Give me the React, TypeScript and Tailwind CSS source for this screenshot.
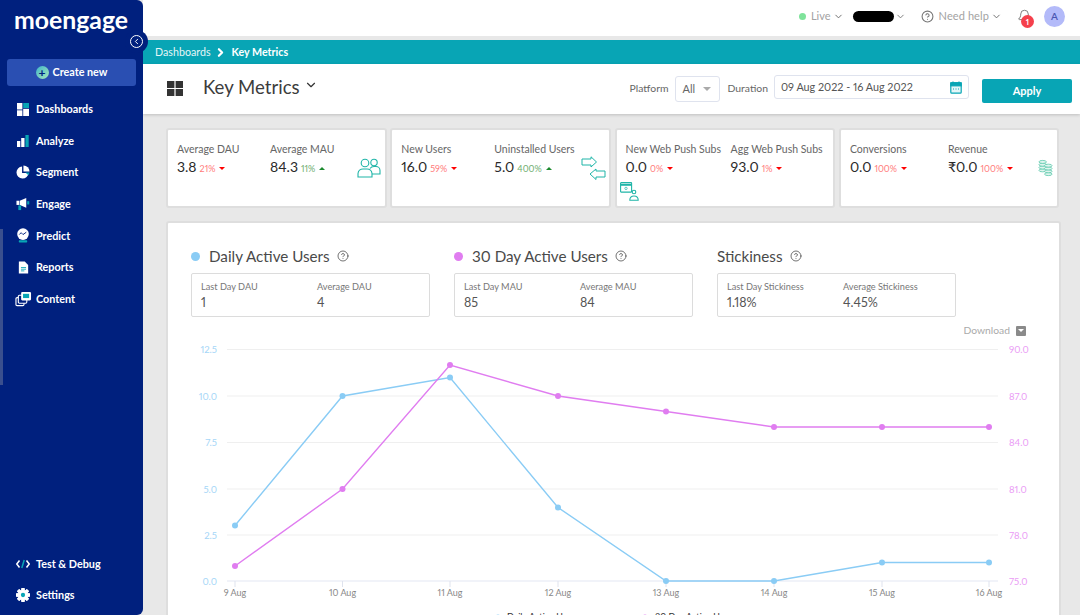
import { ReactNode } from "react";
import { Bell, ChevronDown, ChevronRight, CircleHelp, ChevronLeft } from "lucide-react";

const TEAL = "#08a5b5";
const BLUE = "#8accf5";
const PINK = "#e07df0";

function DashIcon() {
  return (
    <svg width="12" height="13" viewBox="0 0 12 13">
      <rect x="0" y="0" width="5.4" height="6.5" fill="#fff" />
      <rect x="6.2" y="0" width="5.8" height="5" fill={TEAL} />
      <rect x="0" y="7.3" width="5.4" height="5.7" fill="#fff" />
      <rect x="6.2" y="5.8" width="5.8" height="7.2" fill="#fff" />
    </svg>
  );
}

function AnalyzeIcon() {
  return (
    <svg width="12" height="12" viewBox="0 0 12 12">
      <rect x="0" y="6" width="3.3" height="6" fill="#fff" />
      <rect x="4.2" y="3" width="3.3" height="9" fill="#fff" />
      <rect x="8.4" y="0" width="3.3" height="12" fill={TEAL} />
    </svg>
  );
}

function SegmentIcon() {
  return (
    <svg width="14" height="14" viewBox="0 0 15 15">
      <path d="M6.5 1.5a6.5 6.5 0 1 0 7 7h-7z" fill="#fff" />
      <path d="M8 0.5a6.5 6.5 0 0 1 6.5 6.5H8z" fill="#fff" />
      <path d="M10 8h4.5l-1.2 3z" fill={TEAL} />
    </svg>
  );
}

function EngageIcon() {
  return (
    <svg width="14" height="14" viewBox="0 0 15 15">
      <path d="M0.5 4h3v4.5h-3z" fill="#fff" />
      <path d="M4 4l7-3v10.5l-7-3z" fill="#fff" />
      <rect x="12" y="4.5" width="2.2" height="3.5" fill={TEAL} />
      <rect x="2.5" y="9" width="3" height="5" fill={TEAL} />
    </svg>
  );
}

function PredictIcon() {
  return (
    <svg width="14" height="15" viewBox="0 0 15 16">
      <circle cx="7.5" cy="6.5" r="6.2" fill="#fff" />
      <path d="M3.5 7l2-2 2 2 3.5-2.5" fill="none" stroke="#00207e" strokeWidth="1" />
      <rect x="3" y="13" width="9" height="2.6" rx="0.8" fill={TEAL} />
    </svg>
  );
}

function ReportsIcon() {
  return (
    <svg width="11" height="13" viewBox="0 0 13 15">
      <path d="M1 0.5h7l4 4v10H1z" fill="#fff" />
      <path d="M3.5 7.5h6M3.5 9.5h6M3.5 11.5h4" stroke={TEAL} strokeWidth="1" />
    </svg>
  );
}

function ContentIcon() {
  return (
    <svg width="17" height="16" viewBox="0 0 18 17">
      <rect x="1" y="7" width="8.5" height="8.5" rx="1.2" fill="none" stroke="#fff" strokeWidth="1.2" />
      <rect x="3.5" y="4.5" width="9" height="8.5" rx="1.2" fill="#00207e" stroke="#fff" strokeWidth="1.2" />
      <rect x="6.5" y="1" width="10.5" height="9" rx="1.2" fill="#fff" />
      <rect x="8.5" y="3" width="6.5" height="4.5" fill={TEAL} />
    </svg>
  );
}

function DebugIcon() {
  return (
    <svg width="14" height="10" viewBox="0 0 14 10" fill="none" strokeWidth="1.5">
      <path d="M3.5 1.5L0.8 5l2.7 3.5" stroke="#fff" />
      <path d="M10.5 1.5L13.2 5l-2.7 3.5" stroke="#fff" />
      <path d="M8.2 1L5.8 9" stroke={TEAL} />
    </svg>
  );
}

function GearIcon() {
  const teeth = [0, 45, 90, 135, 180, 225, 270, 315];
  return (
    <svg width="14" height="14" viewBox="0 0 15 15">
      {teeth.map((deg) => (
        <rect key={deg} x="5.7" y="0" width="3.6" height="15" rx="0.8" fill="#fff" transform={`rotate(${deg} 7.5 7.5)`} />
      ))}
      <circle cx="7.5" cy="7.5" r="5.2" fill="#fff" />
      <circle cx="7.5" cy="7.5" r="2.3" fill={TEAL} />
    </svg>
  );
}

function NavItem({ icon, label, className }: { icon: ReactNode; label: string; className?: string }) {
  return (
    <div className={`flex h-[31.6px] items-center text-[10.8px] font-bold text-white ${className ?? ""}`}>
      <span className="flex w-[36px] justify-center pl-[10px]">{icon}</span>
      {label}
    </div>
  );
}

function Sidebar() {
  return (
    <aside className="relative z-10 flex h-[615px] w-[143px] shrink-0 flex-col rounded-r-[6px] bg-[#00207e]">
      <div className="relative h-[36px] pl-[14px] pt-[4px] text-[24.8px] font-bold leading-[32px] text-white">
        moengage
        <span className="absolute left-[39px] top-[24px] h-[3px] w-[5px] rounded-full bg-[#00207e]" />
      </div>
      <button className="mx-[7px] mt-[23px] flex h-[27px] items-center justify-center gap-[4px] rounded-[3px] bg-[#2a4fb2] text-[10.8px] font-bold text-white">
        <span className="flex h-[13px] w-[13px] items-center justify-center rounded-full bg-gradient-to-br from-[#38b6c8] to-[#a5e8b8] text-[12px] leading-none text-[#00207e]">+</span>
        Create new
      </button>
      <nav className="mt-[7.5px] flex flex-col">
        <NavItem icon={<DashIcon />} label="Dashboards" />
        <NavItem icon={<AnalyzeIcon />} label="Analyze" />
        <NavItem icon={<SegmentIcon />} label="Segment" />
        <NavItem icon={<EngageIcon />} label="Engage" />
        <NavItem icon={<PredictIcon />} label="Predict" />
        <NavItem icon={<ReportsIcon />} label="Reports" />
        <NavItem icon={<ContentIcon />} label="Content" />
      </nav>
      <div className="mt-auto pb-[4px]">
        <NavItem icon={<DebugIcon />} label="Test & Debug" />
        <NavItem icon={<GearIcon />} label="Settings" />
      </div>
      <div className="absolute left-0 top-[229px] h-[156px] w-[3px] bg-[#3a4f8e]" />
      <div className="absolute left-[125px] top-[30px] flex h-[23px] w-[23px] items-center justify-center rounded-full bg-[#00207e]">
        <span className="flex h-[13px] w-[13px] items-center justify-center rounded-full border border-white text-white">
          <ChevronLeft size={9} strokeWidth={2.5} />
        </span>
      </div>
    </aside>
  );
}

function TopBar() {
  return (
    <div className="flex h-[36px] shrink-0 items-center justify-end bg-white pb-[4px] text-[11px] text-[#a3a3a3]">
      <span className="h-[7px] w-[7px] rounded-full bg-[#7fe39b]" />
      <span className="ml-[5px]">Live</span>
      <ChevronDown size={11} className="ml-[2px] text-[#666]" />
      <span className="ml-[9px] h-[11px] w-[41px] rounded-full bg-black" />
      <ChevronDown size={11} className="ml-[1px] text-[#777]" />
      <CircleHelp size={13} className="ml-[15px] text-[#777]" />
      <span className="ml-[5px] tracking-[0.1px]">Need help</span>
      <ChevronDown size={11} className="ml-[2px] text-[#666]" />
      <span className="relative ml-[14px] flex h-[20px] w-[16px] items-center justify-center">
        <Bell size={15} strokeWidth={1.5} className="text-[#777]" />
        <span className="absolute left-[5px] top-[9px] flex h-[13px] w-[13px] items-center justify-center rounded-full bg-[#f5404c] text-[8px] font-bold text-white">1</span>
      </span>
      <span className="ml-[12px] mr-[15px] flex h-[21px] w-[21px] items-center justify-center rounded-full bg-[#b3baf9] text-[10px] font-semibold text-[#4a55b0]">A</span>
    </div>
  );
}

function PageHeader() {
  return (
    <div className="relative flex h-[50px] shrink-0 items-center bg-white pl-[24px] pr-[8px] shadow-[0_1px_3px_rgba(0,0,0,0.18)]">
      <svg className="mt-[-2px]" width="16" height="15" viewBox="0 0 16 15" fill="#333">
        <rect x="0" y="0" width="7.4" height="7" />
        <rect x="8.6" y="0" width="7.4" height="7" />
        <rect x="0" y="8" width="7.4" height="7" />
        <rect x="8.6" y="8" width="7.4" height="7" />
      </svg>
      <span className="ml-[20px] mt-[-2px] text-[18.6px] text-[#3c3c3c]">Key Metrics</span>
      <ChevronDown size={14} strokeWidth={2} className="ml-[4px] mt-[-8px] text-[#333]" />
      <span className="ml-auto text-[10.4px] text-[#666]">Platform</span>
      <span className="ml-[6px] flex h-[26px] w-[45px] items-center justify-between rounded-[3px] border border-[#dfe3ee] pl-[7px] pr-[8px] text-[11px] text-[#666]">
        All
        <span className="h-0 w-0 border-x-[4px] border-t-[4px] border-x-transparent border-t-[#aaa]" />
      </span>
      <span className="ml-[8px] text-[10.4px] text-[#666]">Duration</span>
      <span className="ml-[6px] mt-[-4px] flex h-[24px] w-[195px] items-center justify-between rounded-[3px] border border-[#dfe3ee] pl-[6px] pr-[6px] text-[10.8px] text-[#555]">
        09 Aug 2022 - 16 Aug 2022
        <svg width="12" height="13" viewBox="0 0 12 13" fill="none" stroke={TEAL} strokeWidth="1.2">
          <rect x="0.8" y="1.8" width="10.4" height="10.4" rx="1" fill="#e4f6f8" />
          <rect x="0.8" y="1.8" width="10.4" height="3" fill={TEAL} />
          <path d="M3 0.5v2M9 0.5v2M3 8h1M5.5 8h1M8 8h1" />
        </svg>
      </span>
      <button className="ml-[13px] mt-[4px] h-[24px] w-[90px] rounded-[2px] bg-[#08a5b5] text-[11px] font-bold text-white">Apply</button>
    </div>
  );
}

function Delta({ pct, up }: { pct: string; up?: boolean }) {
  return (
    <span className={`ml-[3px] inline-flex items-center gap-[4px] text-[9px] ${up ? "text-[#6fae6f]" : "text-[#ff7b7b]"}`}>
      {pct}
      <span
        className={
          up
            ? "h-0 w-0 border-x-[3px] border-b-[3px] border-x-transparent border-b-[#1c8a2e]"
            : "h-0 w-0 border-x-[3px] border-t-[3px] border-x-transparent border-t-[#f00]"
        }
      />
    </span>
  );
}

type MetricProps = { label: string; value: string; pct: string; up?: boolean; width: string };

function Metric({ label, value, pct, up, width }: MetricProps) {
  return (
    <div className={`flex shrink-0 flex-col ${width}`}>
      <span className="whitespace-nowrap text-[10.5px] leading-[14px] text-[#666]">{label}</span>
      <span className="mt-[1px] flex items-baseline whitespace-nowrap text-[14px] leading-[19px] text-[#2a2a2a]">
        {value}
        <Delta pct={pct} up={up} />
      </span>
    </div>
  );
}

function MetricCard({ children }: { children: ReactNode }) {
  return (
    <div className="relative flex h-[80px] w-[220.5px] shrink-0 rounded-[3px] border-2 border-[#dedede] bg-white pl-[9px] pt-[12px]">
      {children}
    </div>
  );
}

function UsersIcon() {
  return (
    <svg className="absolute left-[189px] top-[28px]" width="24" height="20" viewBox="0 0 24 20" fill="none" stroke="#1fb5a8" strokeWidth="1.1">
      <circle cx="8" cy="5" r="3.8" />
      <circle cx="17" cy="4.5" r="3.2" />
      <path d="M1 19v-3.5a5 5 0 0 1 5-4.5h4a5 5 0 0 1 5 4.5V19z" />
      <path d="M13 10.5c1-1.5 2-2 4-2h2a4 4 0 0 1 4 4V16h-8" />
    </svg>
  );
}

function ArrowsIcon() {
  return (
    <svg className="absolute left-[189px] top-[26px]" width="25" height="24" viewBox="0 0 25 24" fill="none" stroke="#1fb5a8" strokeWidth="1">
      <path d="M1 3h9V0.8L15.5 6 10 11V9H1z" />
      <path d="M24 15h-9v-2L9 18l6 5.5V21h9z" />
    </svg>
  );
}

function WebPushIcon() {
  return (
    <svg className="absolute left-[3px] top-[52px]" width="20" height="19" viewBox="0 0 20 19" fill="none" stroke="#1fb5a8" strokeWidth="1.1">
      <rect x="0.6" y="0.6" width="11" height="9.5" rx="0.6" />
      <path d="M0.6 2.8h11" strokeWidth="2" />
      <circle cx="6" cy="6.4" r="1.2" strokeWidth="0.7" />
      <circle cx="14" cy="10" r="1.8" />
      <path d="M9.8 18.2c0-3 1.5-4.2 4.2-4.2s4.2 1.2 4.2 4.2z" />
    </svg>
  );
}

function CoinsIcon() {
  return (
    <svg className="absolute left-[197px] top-[29px]" width="15" height="18" viewBox="0 0 16 18" fill="#dff5ee" stroke="#54c5a8" strokeWidth="0.8">
      <ellipse cx="5" cy="11.5" rx="4" ry="1.6" />
      <ellipse cx="5" cy="8.5" rx="4" ry="1.6" />
      <ellipse cx="5" cy="5.5" rx="4" ry="1.6" />
      <ellipse cx="5" cy="2.5" rx="4" ry="1.6" />
      <ellipse cx="11" cy="15.5" rx="4" ry="1.6" />
      <ellipse cx="11" cy="12.5" rx="4" ry="1.6" />
      <ellipse cx="11" cy="9.5" rx="4" ry="1.6" />
      <ellipse cx="11" cy="6.5" rx="4" ry="1.6" />
    </svg>
  );
}

function CardsRow() {
  return (
    <div className="flex shrink-0 gap-[3.8px] pl-[23px] pt-[14px]">
      <MetricCard>
        <Metric label="Average DAU" value="3.8" pct="21%" width="w-[93px]" />
        <Metric label="Average MAU" value="84.3" pct="11%" up width="w-[90px]" />
        <UsersIcon />
      </MetricCard>
      <MetricCard>
        <Metric label="New Users" value="16.0" pct="59%" width="w-[93px]" />
        <Metric label="Uninstalled Users" value="5.0" pct="400%" up width="w-[90px]" />
        <ArrowsIcon />
      </MetricCard>
      <MetricCard>
        <Metric label="New Web Push Subs" value="0.0" pct="0%" width="w-[105px]" />
        <Metric label="Agg Web Push Subs" value="93.0" pct="1%" width="w-[100px]" />
        <WebPushIcon />
      </MetricCard>
      <MetricCard>
        <Metric label="Conversions" value="0.0" pct="100%" width="w-[98px]" />
        <Metric label="Revenue" value="₹0.0" pct="100%" width="w-[90px]" />
        <CoinsIcon />
      </MetricCard>
    </div>
  );
}

type StatProps = { dot?: string; title: string; labelA: string; valueA: string; labelB: string; valueB: string };

function StatBlock({ dot, title, labelA, valueA, labelB, valueB }: StatProps) {
  return (
    <div className="flex w-[239px] flex-col">
      <div className="flex h-[24px] items-center text-[15.2px] text-[#4a4a4a]">
        {dot && <span className={`mr-[9px] h-[9px] w-[9px] rounded-full ${dot}`} />}
        {title}
        <CircleHelp size={12} strokeWidth={1.5} className="ml-[7px] text-[#444]" />
      </div>
      <div className="mt-[5px] flex h-[44px] rounded-[2px] border border-[#dcdcdc] pl-[9px] pt-[6px]">
        <div className="flex w-[116px] flex-col">
          <span className="text-[9.2px] leading-[13px] text-[#777]">{labelA}</span>
          <span className="mt-[1px] text-[12.5px] leading-[17px] text-[#555]">{valueA}</span>
        </div>
        <div className="flex flex-col">
          <span className="text-[9.2px] leading-[13px] text-[#777]">{labelB}</span>
          <span className="mt-[1px] text-[12.5px] leading-[17px] text-[#555]">{valueB}</span>
        </div>
      </div>
    </div>
  );
}

const XS = [234, 341.5, 449, 557, 665, 773, 881, 988];
const LABELS = ["9 Aug", "10 Aug", "11 Aug", "12 Aug", "13 Aug", "14 Aug", "15 Aug", "16 Aug"];
const GRID = [349.5, 396, 442.5, 489, 535, 581];
const LEFT = ["12.5", "10.0", "7.5", "5.0", "2.5", "0.0"];
const RIGHT = ["90.0", "87.0", "84.0", "81.0", "78.0", "75.0"];
const DAU_Y = [525.5, 396, 377.5, 507.5, 581, 581, 562.5, 562.5];
const MAU_Y = [566, 489, 365, 396, 411.5, 427, 427, 427];

function Series({ ys, color }: { ys: number[]; color: string }) {
  return (
    <g>
      <polyline points={ys.map((y, i) => `${XS[i]},${y}`).join(" ")} fill="none" stroke={color} strokeWidth="1.4" />
      {ys.map((y, i) => (
        <circle key={i} cx={XS[i]} cy={y} r="3" fill={color} />
      ))}
    </g>
  );
}

function Chart() {
  return (
    <svg className="mt-[3px] block" width="892" height="275" viewBox="167 340 892 275" fontFamily="Lato, sans-serif">
      {GRID.map((y, i) => (
        <g key={y}>
          <line x1="226" x2="997" y1={y} y2={y} stroke={i === 5 ? "#e3e7f3" : "#efefef"} strokeWidth="1" />
          <text x="216" y={y + 3.5} textAnchor="end" fontSize="9.5" fill="#a5d6f7">{LEFT[i]}</text>
          <text x="1008" y={y + 3.5} fontSize="9.5" fill="#ea9cf5">{RIGHT[i]}</text>
        </g>
      ))}
      {XS.map((x, i) => (
        <g key={x}>
          <line x1={x} x2={x} y1="581" y2="587" stroke="#dfe3ee" />
          <text x={x} y="596" textAnchor="middle" fontSize="9" fill="#888">{LABELS[i]}</text>
        </g>
      ))}
      <Series ys={DAU_Y} color={BLUE} />
      <Series ys={MAU_Y} color={PINK} />
      <circle cx="497" cy="617" r="2.5" fill={BLUE} />
      <text x="506" y="620" fontSize="9" fill="#333">Daily Active Users</text>
      <circle cx="644" cy="617" r="2.5" fill={PINK} />
      <text x="654" y="620" fontSize="9" fill="#333">30 Day Active Users</text>
    </svg>
  );
}

function ChartCard() {
  return (
    <div className="ml-[23px] mt-[13px] h-[400px] w-[895px] shrink-0 rounded-[3px] border-2 border-[#dedede] bg-white">
      <div className="flex gap-[24px] pl-[23px] pt-[21px]">
        <StatBlock dot="bg-[#8accf5]" title="Daily Active Users" labelA="Last Day DAU" valueA="1" labelB="Average DAU" valueB="4" />
        <StatBlock dot="bg-[#e07df0]" title="30 Day Active Users" labelA="Last Day MAU" valueA="85" labelB="Average MAU" valueB="84" />
        <StatBlock title="Stickiness" labelA="Last Day Stickiness" valueA="1.18%" labelB="Average Stickiness" valueB="4.45%" />
      </div>
      <div className="mr-[33px] mt-[7px] flex h-[13px] items-center justify-end gap-[6px] text-[10.3px] text-[#aaa]">
        Download
        <span className="flex h-[10px] w-[10px] items-center justify-center rounded-[1px] bg-[#8a8a8a]">
          <span className="h-0 w-0 border-x-[3px] border-t-[3px] border-x-transparent border-t-white" />
        </span>
      </div>
      <Chart />
    </div>
  );
}

export default function App() {
  return (
    <div className="flex h-[615px] w-[1080px] overflow-hidden bg-[#e8e8e8] font-['Lato',sans-serif] proportional-nums">
      <Sidebar />
      <main className="flex min-w-0 flex-1 flex-col">
        <TopBar />
        <div className="mt-[4px] flex h-[24px] shrink-0 items-center gap-[3px] bg-[#08a5b5] pl-[12px] text-[10.7px] text-white">
          <span className="opacity-90">Dashboards</span>
          <ChevronRight size={13} strokeWidth={4} />
          <span className="ml-[2px] font-bold">Key Metrics</span>
        </div>
        <PageHeader />
        <CardsRow />
        <ChartCard />
      </main>
    </div>
  );
}
